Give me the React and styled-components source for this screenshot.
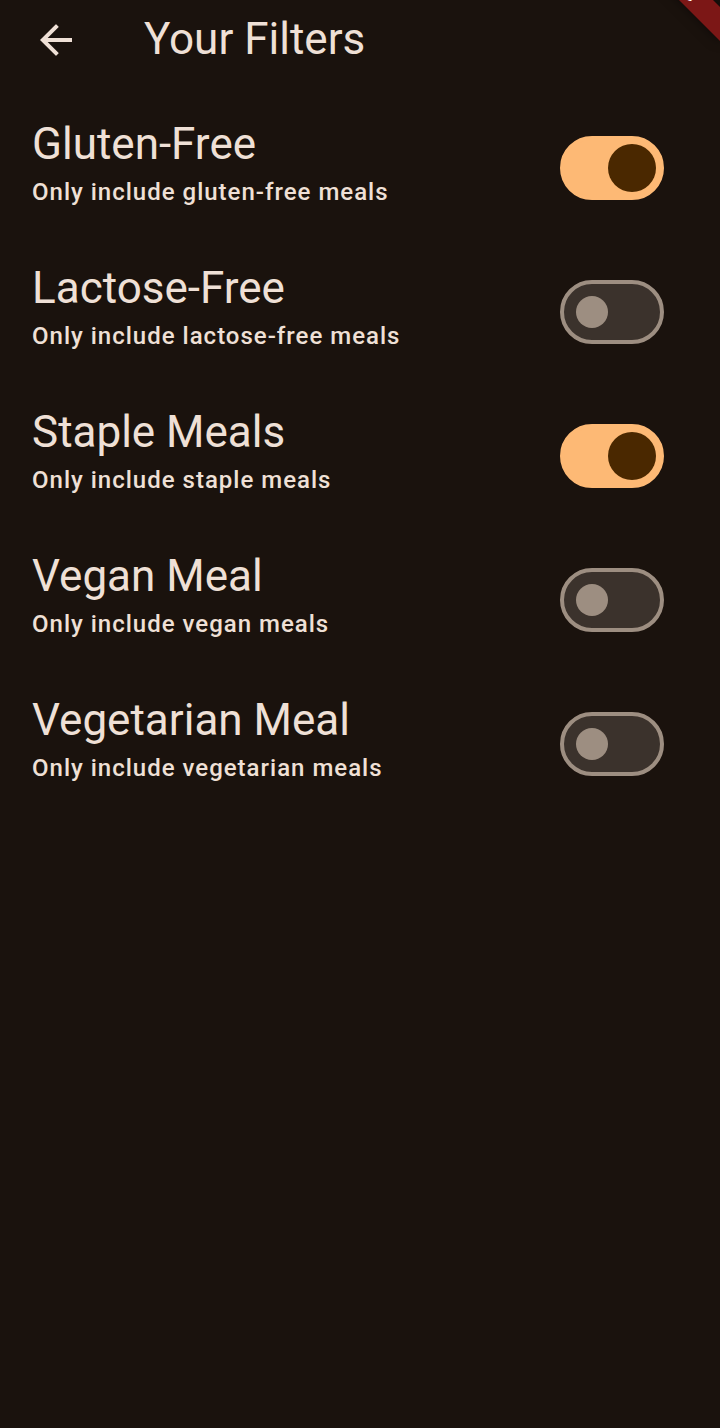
import React, { useState } from "react";
import styled, { createGlobalStyle, ThemeProvider } from "styled-components";

const theme = {
  background: "#1a120d",
  onSurface: "#efe0d6",
  primary: "#fdb975",
  onPrimary: "#4a2800",
  track: "#3b322c",
  outline: "#9d8e81",
};

const GlobalStyle = createGlobalStyle`
  *, *::before { box-sizing: border-box; }
  body {
    margin: 0;
    background: ${theme.background};
    color: ${theme.onSurface};
    font-family: Roboto, "Liberation Sans", sans-serif;
  }
`;

const Screen = styled.div`
  min-height: 100vh;
  background: ${(p) => p.theme.background};
`;

const AppBar = styled.header`
  display: flex;
  align-items: center;
  gap: 48px;
  height: 96px;
  padding: 0 16px 18px;
`;

const BackButton = styled.button`
  display: flex;
  align-items: center;
  justify-content: center;
  width: 80px;
  height: 80px;
  padding: 2px 0 0;
  border: 0;
  border-radius: 50%;
  background: none;
  color: inherit;
  cursor: pointer;
`;

const Title = styled.h1`
  margin: 0;
  font-size: 44px;
  line-height: 56px;
  font-weight: 400;
`;

const FilterList = styled.main`
  display: flex;
  flex-direction: column;
`;

const FilterTile = styled.label`
  display: flex;
  align-items: center;
  justify-content: space-between;
  gap: 32px;
  min-height: 144px;
  padding: 0 56px 0 32px;
  cursor: pointer;
`;

const TileText = styled.span`
  display: flex;
  flex-direction: column;
  gap: 4px;
  padding-bottom: 12px;
`;

const TileTitle = styled.span`
  font-size: 44px;
  line-height: 56px;
`;

const TileSubtitle = styled.span`
  font-size: 24px;
  line-height: 32px;
  font-weight: 500;
  letter-spacing: 1px;
`;

const Switch = styled.input`
  appearance: none;
  display: flex;
  flex-shrink: 0;
  align-items: center;
  width: 104px;
  height: 64px;
  margin: 0;
  padding: 0 12px;
  border: 4px solid ${(p) => p.theme.outline};
  border-radius: 32px;
  background: ${(p) => p.theme.track};
  cursor: pointer;

  &::before {
    content: "";
    width: 32px;
    height: 32px;
    border-radius: 50%;
    background: ${(p) => p.theme.outline};
  }

  &:checked {
    justify-content: flex-end;
    padding: 0 4px;
    border-color: ${(p) => p.theme.primary};
    background: ${(p) => p.theme.primary};
  }

  &:checked::before {
    width: 48px;
    height: 48px;
    background: ${(p) => p.theme.onPrimary};
  }
`;

const BannerCorner = styled.div`
  position: absolute;
  top: 0;
  right: 0;
  width: 160px;
  height: 160px;
  overflow: hidden;
  pointer-events: none;
`;

const Banner = styled.div`
  position: absolute;
  top: -36px;
  right: -32px;
  width: 160px;
  height: 24px;
  transform: rotate(45deg);
  background: #7c1716;
  box-shadow: 0 0 12px rgba(0, 0, 0, 0.5);
  color: #fff;
  font-size: 20px;
  line-height: 22px;
  font-weight: 900;
  text-align: center;
`;

const filters = [
  { id: "gluten", title: "Gluten-Free", subtitle: "Only include gluten-free meals", on: true },
  { id: "lactose", title: "Lactose-Free", subtitle: "Only include lactose-free meals", on: false },
  { id: "staple", title: "Staple Meals", subtitle: "Only include staple meals", on: true },
  { id: "vegan", title: "Vegan Meal", subtitle: "Only include vegan meals", on: false },
  { id: "vegetarian", title: "Vegetarian Meal", subtitle: "Only include vegetarian meals", on: false },
];

function ArrowBack() {
  return (
    <svg width="48" height="48" viewBox="0 0 24 24" fill="currentColor" aria-hidden="true">
      <path d="M20 11H7.83l5.4-5.4q.2-.2 0-.4L12.2 4.2q-.2-.2-.4 0L4 12l7.8 7.8q.2.2.4 0l1.03-1q.2-.2 0-.4L7.83 13H20z" />
    </svg>
  );
}

export default function App() {
  const [enabled, setEnabled] = useState(() =>
    Object.fromEntries(filters.map((f) => [f.id, f.on]))
  );
  const toggle = (id) => setEnabled((prev) => ({ ...prev, [id]: !prev[id] }));

  return (
    <ThemeProvider theme={theme}>
      <GlobalStyle />
      <Screen>
        <AppBar>
          <BackButton type="button" aria-label="Back">
            <ArrowBack />
          </BackButton>
          <Title>Your Filters</Title>
        </AppBar>
        <FilterList>
          {filters.map((f) => (
            <FilterTile key={f.id} htmlFor={f.id}>
              <TileText>
                <TileTitle>{f.title}</TileTitle>
                <TileSubtitle>{f.subtitle}</TileSubtitle>
              </TileText>
              <Switch
                id={f.id}
                type="checkbox"
                role="switch"
                checked={enabled[f.id]}
                onChange={() => toggle(f.id)}
              />
            </FilterTile>
          ))}
        </FilterList>
        <BannerCorner>
          <Banner>DEBUG</Banner>
        </BannerCorner>
      </Screen>
    </ThemeProvider>
  );
}
